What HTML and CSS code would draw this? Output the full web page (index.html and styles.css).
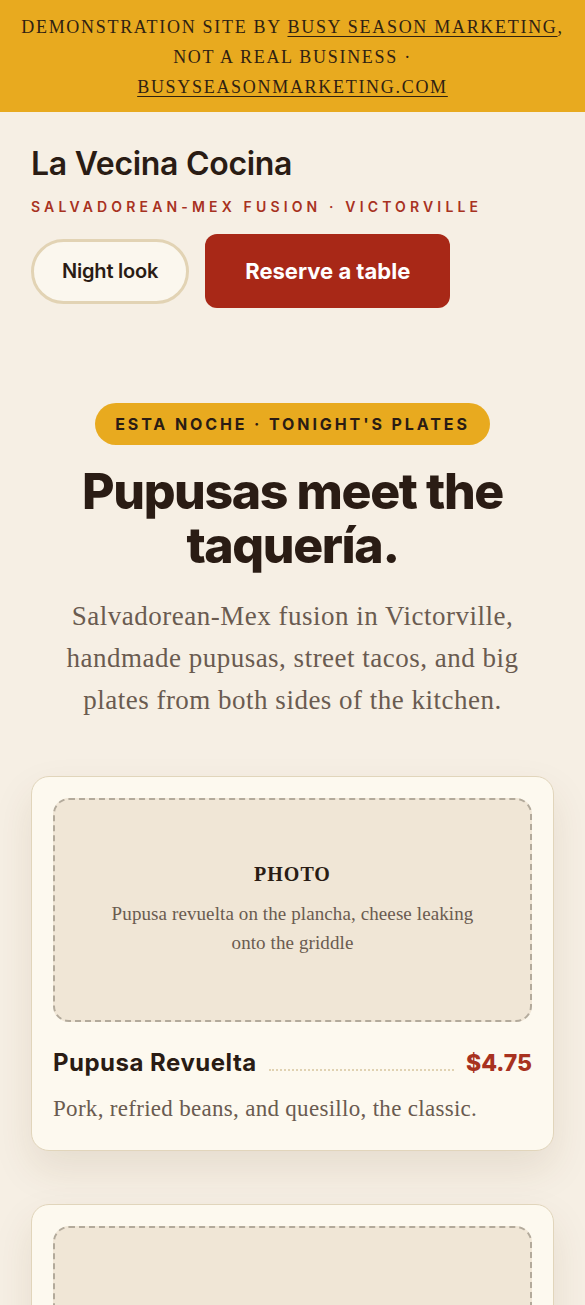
FILE: index.html
```html
<!DOCTYPE html>
<html lang="en">
<head>
  <meta charset="UTF-8">
  <meta name="viewport" content="width=device-width, initial-scale=1.0">
  <title>La Vecina Cocina</title>
  <link rel="stylesheet" href="styles.css">
</head>
<body>
  <div class="demo-bar">
    Demonstration site by <a href="#">Busy Season Marketing</a>, not a real business &middot;<br>
    <a href="#">busyseasonmarketing.com</a>
  </div>

  <header class="site-header">
    <h1 class="brand">La Vecina Cocina</h1>
    <p class="tagline">Salvadorean-Mex fusion &middot; Victorville</p>
    <div class="header-actions">
      <button class="btn-ghost" type="button">Night look</button>
      <a class="btn-primary" href="#">Reserve a table</a>
    </div>
  </header>

  <section class="hero">
    <span class="badge">Esta noche &middot; Tonight's plates</span>
    <h2>Pupusas meet the taquer&iacute;a.</h2>
    <p>Salvadorean-Mex fusion in Victorville, handmade pupusas, street tacos, and big plates from both sides of the kitchen.</p>
  </section>

  <main class="menu">
    <article class="dish">
      <div class="photo">
        <strong>Photo</strong>
        <span>Pupusa revuelta on the plancha, cheese leaking onto the griddle</span>
      </div>
      <div class="dish-row">
        <h3>Pupusa Revuelta</h3>
        <span class="leader"></span>
        <span class="price">$4.75</span>
      </div>
      <p class="dish-desc">Pork, refried beans, and quesillo, the classic.</p>
    </article>

    <article class="dish">
      <div class="photo">
        <strong>Photo</strong>
        <span>Tacos al pastor fresh off the trompo</span>
      </div>
      <div class="dish-row">
        <h3>Tacos al Pastor</h3>
        <span class="leader"></span>
        <span class="price">$12.50</span>
      </div>
      <p class="dish-desc">Three tacos, pineapple, onion, cilantro.</p>
    </article>
  </main>
</body>
</html>
```

FILE: styles.css
```css
body {
  margin: 0;
  background: #f6efe4;
  color: #2a1c14;
  font-family: 'Liberation Serif', serif;
}

.demo-bar {
  background: #e8aa1f;
  color: #2f2112;
  text-align: center;
  text-transform: uppercase;
  font-size: 18px;
  letter-spacing: 1.7px;
  line-height: 30px;
  padding: 12px 12px 10px;
}

.demo-bar a {
  color: inherit;
  text-decoration: underline;
  text-underline-offset: 3px;
}

.site-header {
  padding: 33px 31px 0;
}

.brand {
  margin: 0;
  font-family: Inter, sans-serif;
  font-size: 32px;
  font-weight: 600;
  letter-spacing: -0.3px;
  line-height: 38px;
}

.tagline {
  margin: 15px 0 0;
  color: #a8321f;
  font-family: Inter, sans-serif;
  font-size: 14px;
  font-weight: 600;
  letter-spacing: 4.15px;
  text-transform: uppercase;
}

.header-actions {
  display: flex;
  align-items: center;
  gap: 16px;
  margin-top: 19px;
}

.btn-ghost {
  height: 65px;
  padding: 0 28px;
  border: 3px solid #e2d3b4;
  border-radius: 999px;
  background: #fbf7ee;
  color: #2a1c14;
  font-family: Inter, sans-serif;
  font-size: 20px;
  font-weight: 600;
  letter-spacing: -0.2px;
}

.btn-primary {
  display: flex;
  align-items: center;
  height: 74px;
  padding: 0 40px;
  border-radius: 12px;
  background: #a82817;
  color: #fff;
  font-family: Inter, sans-serif;
  font-size: 22px;
  font-weight: 700;
  text-decoration: none;
}

.hero {
  display: flex;
  flex-direction: column;
  align-items: center;
  text-align: center;
  padding: 95px 30px 0;
}

.badge {
  padding: 11px 20px 11px;
  border-radius: 999px;
  background: #e8aa1f;
  color: #2a1c14;
  font-family: Inter, sans-serif;
  font-size: 16px;
  font-weight: 700;
  letter-spacing: 2.9px;
  text-transform: uppercase;
}

.hero h2 {
  margin: 19px 0 0;
  font-family: Inter, sans-serif;
  font-size: 50px;
  font-weight: 800;
  letter-spacing: -1.4px;
  line-height: 54px;
  max-width: 470px;
}

.hero p {
  margin: 23px 0 0;
  color: #6a5b50;
  font-size: 27px;
  letter-spacing: 0.5px;
  line-height: 42px;
  max-width: 470px;
}

.menu {
  display: flex;
  flex-direction: column;
  gap: 53px;
  padding: 55px 31px 40px;
}

.dish {
  padding: 21px 21px 26px;
  border: 1px solid #e1d5bb;
  border-radius: 18px;
  background: #fdf9ef;
  box-shadow: 0 18px 40px rgba(90, 60, 20, 0.1);
}

.photo {
  display: flex;
  flex-direction: column;
  align-items: center;
  justify-content: center;
  gap: 13px;
  height: 220px;
  padding: 0 38px;
  border: 2px dashed #b3aa9b;
  border-radius: 16px;
  background: #f0e6d6;
  text-align: center;
}

.photo strong {
  font-size: 20px;
  font-weight: 700;
  letter-spacing: 1px;
  text-transform: uppercase;
}

.photo span {
  color: #6a5b50;
  font-size: 19px;
  letter-spacing: 0.1px;
  line-height: 29px;
}

.dish-row {
  display: flex;
  align-items: baseline;
  gap: 12px;
  margin-top: 26px;
}

.dish-row h3 {
  margin: 0;
  font-family: Inter, sans-serif;
  font-size: 24px;
  font-weight: 700;
  letter-spacing: 0.5px;
}

.leader {
  flex: 1;
  border-bottom: 2px dotted #e0d2b2;
}

.price {
  color: #a8321f;
  font-family: Inter, sans-serif;
  font-size: 23px;
  font-weight: 800;
}

.dish-desc {
  margin: 17px 0 0;
  color: #6a5b50;
  font-size: 23px;
  letter-spacing: 0.3px;
  line-height: 30px;
}
```
